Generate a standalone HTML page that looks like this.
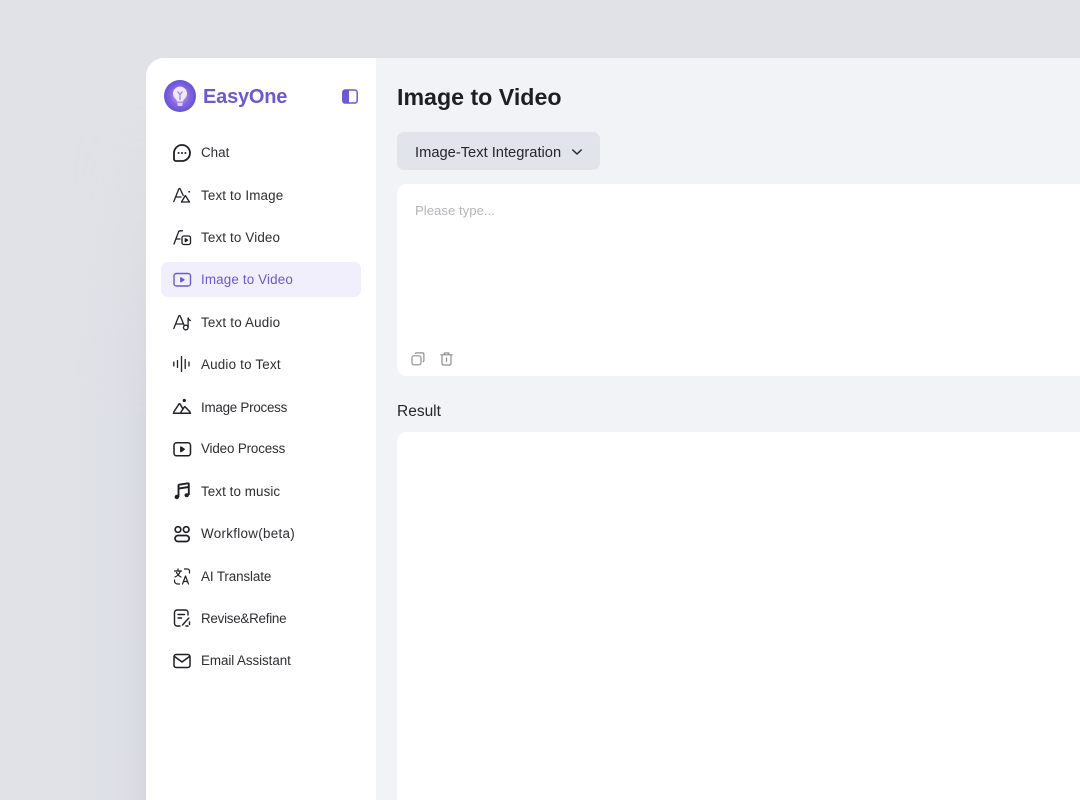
<!DOCTYPE html>
<html><head><meta charset="utf-8"><title>EasyOne</title>
<style>
html,body{margin:0;padding:0;width:1080px;height:800px;overflow:hidden;background:#e0e2e7;font-family:"Liberation Sans",sans-serif}
#root{position:relative;width:1080px;height:800px;overflow:hidden;background:#e0e2e7}
.abs{position:absolute}
#shadow{left:70px;top:100px;width:76px;height:700px;background:linear-gradient(90deg,rgba(221,223,231,0) 0,rgba(221,223,231,.7) 50%,#dadce3 85%,#d6d8df 100%);-webkit-mask-image:linear-gradient(to bottom,transparent,#000 45%);mask-image:linear-gradient(to bottom,transparent,#000 45%)}
#app{left:146px;top:58px;width:934px;height:742px;background:#f1f3f7;border-radius:18px 0 0 0;overflow:hidden}
#side{left:146px;top:58px;width:230px;height:742px;background:#fff;border-radius:18px 0 0 0}
.t{position:absolute;left:201px;font-size:13.4px;line-height:18px;color:#2e2e33;white-space:nowrap}
.ic{position:absolute;left:172px;width:20px;height:20px;fill:none;stroke:#1f1f24;stroke-width:1.4;stroke-linecap:round;stroke-linejoin:round}
#act{left:161px;top:262px;width:200px;height:35px;background:#f1effc;border-radius:7px}
#h{left:397px;top:83px;font-size:23.2px;line-height:28px;font-weight:700;color:#1f1f22;white-space:nowrap}
#sel{left:397px;top:132px;width:203px;height:38px;background:#e1e4eb;border-radius:7px}
#seltxt{left:415px;top:144px;font-size:14.7px;line-height:18px;color:#26262b;white-space:nowrap}
#box{left:397px;top:184px;width:683px;height:192px;background:#fff;border-radius:10px 0 0 10px}
#ph{left:415px;top:202px;font-size:13.2px;line-height:18px;color:#b3b5bb;white-space:nowrap}
#res{left:397px;top:402px;font-size:15.5px;line-height:19px;color:#26262b}
#out{left:397px;top:432px;width:683px;height:368px;background:#fff;border-radius:10px 0 0 0}
#brand{left:203px;top:85px;font-size:20px;line-height:24px;font-weight:700;color:#6b5ad1;white-space:nowrap;letter-spacing:-.2px}
</style></head><body>
<div id="root">
<div class="abs" id="shadow"></div>
<div class="abs" id="app"></div>
<div class="abs" id="side"></div>

<svg class="abs" style="left:164px;top:80px" width="32" height="32" viewBox="0 0 32 32">
<defs><radialGradient id="g" cx="50%" cy="50%" r="50%"><stop offset="0" stop-color="#c9b8f5"/><stop offset=".6" stop-color="#8a63e0"/><stop offset="1" stop-color="#5f55d6"/></radialGradient></defs>
<circle cx="16" cy="16" r="16" fill="url(#g)"/>
<path d="M16 6.500a7 7 0 0 0-4.200 12.600c.8.7 1 1.400 1.100 2.400h6.200c.1-1 .3-1.700 1.100-2.400A7 7 0 0 0 16 6.500z" fill="#efe9fd"/>
<path d="M13.200 22.600h5.600l-.5 3.400h-4.600z" fill="#d9cff8"/>
<path d="M16 20v-6M13.600 11.500l2.400 3 2.400-3" fill="none" stroke="#9a80e4" stroke-width="1.200"/>
</svg>
<div class="abs" id="brand">EasyOne</div>
<svg class="abs" style="left:342px;top:89px" width="16" height="15" viewBox="0 0 16 15"><rect x=".8" y="1" width="14.400" height="13" rx="2.400" fill="#fff" stroke="#6b5ad1" stroke-width="1.500"/><path d="M2.800 1h4.200v13H2.800A2 2 0 0 1 .8 12V3a2 2 0 0 1 2-2z" fill="#6b5ad1"/></svg>

<div class="abs" id="act"></div>

<svg class="ic" style="top:143px;stroke-width:1.800" viewBox="0 0 20 20"><path d="M10 2a8 8 0 0 1 0 16H4a2 2 0 0 1-2-2V10A8 8 0 0 1 10 2z"/></svg>
<svg class="abs" style="left:172px;top:143px" width="20" height="20" viewBox="0 0 20 20"><circle cx="6.600" cy="10" r="1" fill="#1f1f24"/><circle cx="10" cy="10" r="1" fill="#1f1f24"/><circle cx="13.400" cy="10" r="1" fill="#1f1f24"/></svg>
<div class="t" style="top:144px">Chat</div>

<svg class="ic" style="top:185px;stroke-width:1.300" viewBox="0 0 20 20"><path d="M1.800 16.500 6.800 4c.3-.7 1-.7 1.400 0l3 6.500M4 12h5"/><path d="M9.500 17l3.800-6.500 4.200 6.500z"/><circle cx="17.200" cy="6.800" r=".9" fill="#1f1f24" stroke="none"/></svg>
<div class="t" style="top:187px;letter-spacing:.15px">Text to Image</div>

<svg class="ic" style="top:227px;stroke-width:1.300" viewBox="0 0 20 20"><path d="M2 17 6.500 5c.3-.8.800-1.200 1.500-1.200h2.500M4 12h4"/><rect x="10" y="9" width="8.500" height="8.500" rx="1.800"/><path d="M13.300 11.800l2.300 1.400-2.300 1.400z" fill="#1f1f24"/></svg>
<div class="t" style="top:229px;letter-spacing:.15px">Text to Video</div>

<svg class="ic" style="top:270px;stroke:#6b5ad1;stroke-width:1.400" viewBox="0 0 20 20"><rect x="2" y="3.500" width="16.500" height="12.500" rx="2.400"/><path d="M8.800 7.800l3.200 2-3.200 2z" fill="#6b5ad1"/></svg>
<div class="t" style="top:271px;color:#6b5ad1;letter-spacing:.15px">Image to Video</div>

<svg class="ic" style="top:312px;stroke-width:1.300" viewBox="0 0 20 20"><path d="M1.800 16.500 6.800 4c.3-.7 1-.7 1.400 0l3.800 9M4 12h6.500"/><circle cx="13.800" cy="15.500" r="2.300"/><path d="M16.100 15.500V6c.2 1.300 1 2 2.300 2.500"/></svg>
<div class="t" style="top:314px;letter-spacing:.2px">Text to Audio</div>

<svg class="ic" style="top:354px;stroke-width:1.300" viewBox="0 0 20 20"><path d="M1.800 8v4M5.500 6.500v7M9.500 2.500v15M13.200 5.500v9M17 8v4"/></svg>
<div class="t" style="top:356px;letter-spacing:.2px">Audio to Text</div>

<svg class="ic" style="top:396px;stroke-width:1.500" viewBox="0 0 20 20"><path d="M1.800 16 7 8c.2-.4.700-.4 1 0l3 5M9 16l3.300-5c.3-.4.700-.4 1 0l4.700 5"/><path d="M1.500 17.300h17"/><circle cx="12.300" cy="4.500" r="1.600" fill="#1f1f24" stroke="none"/></svg>
<div class="t" style="top:399px;letter-spacing:-.25px">Image Process</div>

<svg class="ic" style="top:439px;stroke-width:1.500" viewBox="0 0 20 20"><rect x="2" y="3.800" width="16.500" height="13" rx="2.600"/><path d="M8.800 8l3.400 2.300-3.400 2.300z" fill="#1f1f24"/></svg>
<div class="t" style="top:440px;letter-spacing:-.15px">Video Process</div>

<svg class="ic" style="top:481px;stroke-width:1.900;stroke-linecap:butt" viewBox="0 0 20 20"><path d="M6.500 16V4.600c0-.5.300-.8.800-.9l8.700-1.400c.5-.1.800.2.800.7V14M6.500 7.600l10-1.600"/></svg>
<svg class="abs" style="left:172px;top:481px" width="20" height="20" viewBox="0 0 20 20"><circle cx="4.800" cy="16" r="2.200" fill="#1f1f24"/><ellipse cx="14.700" cy="14.200" rx="2.200" ry="2" fill="#1f1f24"/></svg>
<div class="t" style="top:483px;letter-spacing:.08px">Text to music</div>

<svg class="ic" style="top:524px;stroke-width:1.700" viewBox="0 0 20 20"><circle cx="6" cy="5.500" r="2.800"/><circle cx="14.200" cy="5.500" r="2.800"/><rect x="3" y="11.500" width="14.200" height="6" rx="3"/></svg>
<div class="t" style="top:525px;letter-spacing:.3px">Workflow(beta)</div>

<svg class="ic" style="top:566px;stroke-width:1.200" viewBox="0 0 20 20"><path d="M2.500 5h7M6 3v2M8.300 5C7.500 8 5.500 10 3 11M4.500 6.500c1 2 2.500 3.500 4.500 4.500"/><path d="M10.500 18l3-8 3 8M11.600 15.500h3.800"/><path d="M12.500 3h3a2 2 0 0 1 2 2v2M2.500 14v1a3 3 0 0 0 3 3h2"/></svg>
<div class="t" style="top:568px;letter-spacing:-.1px">AI Translate</div>

<svg class="ic" style="top:608px;stroke-width:1.400" viewBox="0 0 20 20"><path d="M8 18H5a2.500 2.500 0 0 1-2.500-2.500v-11A2.500 2.500 0 0 1 5 2h8.500A2.500 2.500 0 0 1 16 4.500V7"/><path d="M6 6.500h6.500M6 10h3.500"/><path d="M10.500 17l6.300-7M17.500 14v2.500M14 18h2"/></svg>
<div class="t" style="top:610px;letter-spacing:-.25px">Revise&amp;Refine</div>

<svg class="ic" style="top:651px;stroke-width:1.500" viewBox="0 0 20 20"><rect x="2" y="3.500" width="16" height="13" rx="2.200"/><path d="M2.500 5.500 10 11l7.500-5.500"/></svg>
<div class="t" style="top:652px;letter-spacing:-.07px">Email Assistant</div>

<div class="abs" id="h">Image to Video</div>
<div class="abs" id="sel"></div>
<div class="abs" id="seltxt">Image-Text Integration</div>
<svg class="abs" style="left:571px;top:147px" width="12" height="10" viewBox="0 0 12 10"><path d="M1.800 3l4.200 4 4.200-4" fill="none" stroke="#26262b" stroke-width="1.500" stroke-linecap="round" stroke-linejoin="round"/></svg>
<div class="abs" id="box"></div>
<div class="abs" id="ph">Please type...</div>
<svg class="abs" style="left:410px;top:351px" width="16" height="16" viewBox="0 0 16 16" fill="none" stroke="#8d9097" stroke-width="1.200" stroke-linejoin="round"><rect x="2" y="4.800" width="9" height="9" rx="2"/><path d="M5 2.800c.2-.6.700-.9 1.300-.9h6c.9 0 1.600.7 1.600 1.600v6c0 .7-.4 1.200-1 1.400"/></svg>
<svg class="abs" style="left:439px;top:351px" width="15" height="16" viewBox="0 0 15 16" fill="none" stroke="#8d9097" stroke-width="1.200" stroke-linecap="round" stroke-linejoin="round"><path d="M1.800 3.800h11.400M5.200 3.500V2h4.600v1.500M3 4v8.500c0 1 .6 1.500 1.500 1.500h6c.9 0 1.500-.5 1.500-1.500V4M7.500 7v3.500"/></svg>
<div class="abs" id="res">Result</div>
<div class="abs" id="out"></div>
</div>
</body></html>
